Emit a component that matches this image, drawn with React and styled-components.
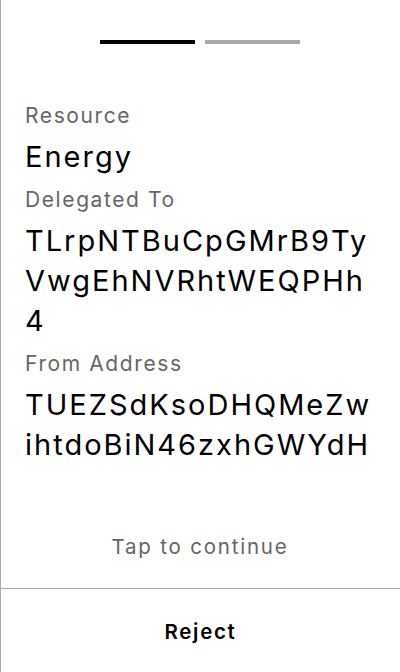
import React from "react";
import styled, { createGlobalStyle } from "styled-components";

const Global = createGlobalStyle`
  html, body { margin: 0; padding: 0; background: #fff; }
  body { font-family: Inter, "Noto Sans", sans-serif; }
  * { box-sizing: border-box; }
`;

const Screen = styled.div`
  width: 400px;
  height: 672px;
  display: flex;
  flex-direction: column;
  border-left: 1px solid #aaaaaa;
  background: #fff;
`;

const Body = styled.div`
  flex: 1;
  display: flex;
  flex-direction: column;
  padding: 40px 25px 0 24px;
`;

const Steps = styled.div`
  display: flex;
  justify-content: center;
  gap: 10px;
  margin-bottom: 57px;
  margin-left: -1px;
`;

const Step = styled.div`
  width: 95px;
  height: 4px;
  background: ${(p) => (p.$active ? "#000" : "#aaaaaa")};
`;

const Field = styled.div`
  display: flex;
  flex-direction: column;
  margin-bottom: 8px;
`;

const Label = styled.div`
  font-size: 21px;
  line-height: 30px;
  letter-spacing: 1.6px;
  color: #666666;
  margin-bottom: 6px;
`;

const Value = styled.div`
  font-size: 29px;
  line-height: 40px;
  letter-spacing: 2px;
  color: #000;
  word-break: break-all;
`;

const Hint = styled.div`
  margin-top: auto;
  text-align: center;
  font-size: 20.5px;
  line-height: 30px;
  letter-spacing: 1.8px;
  color: #666666;
  padding-bottom: 26px;
`;

const Footer = styled.button`
  height: 84px;
  border: none;
  border-top: 1px solid #aaaaaa;
  background: #fff;
  font-family: Inter, "Noto Sans", sans-serif;
  font-size: 20.5px;
  font-weight: 600;
  letter-spacing: 1.7px;
  color: #000;
  display: flex;
  align-items: center;
  justify-content: center;
  padding: 2px 0 0 0;
  cursor: pointer;
`;

const fields = [
  { label: "Resource", value: "Energy" },
  { label: "Delegated To", value: "TLrpNTBuCpGMrB9TyVwgEhNVRhtWEQPHh4" },
  { label: "From Address", value: "TUEZSdKsoDHQMeZwihtdoBiN46zxhGWYdH" },
];

export default function App() {
  return (
    <>
      <Global />
      <Screen>
        <Body>
          <Steps>
            <Step $active />
            <Step />
          </Steps>
          {fields.map((f) => (
            <Field key={f.label}>
              <Label>{f.label}</Label>
              <Value>{f.value}</Value>
            </Field>
          ))}
          <Hint>Tap to continue</Hint>
        </Body>
        <Footer>Reject</Footer>
      </Screen>
    </>
  );
}
